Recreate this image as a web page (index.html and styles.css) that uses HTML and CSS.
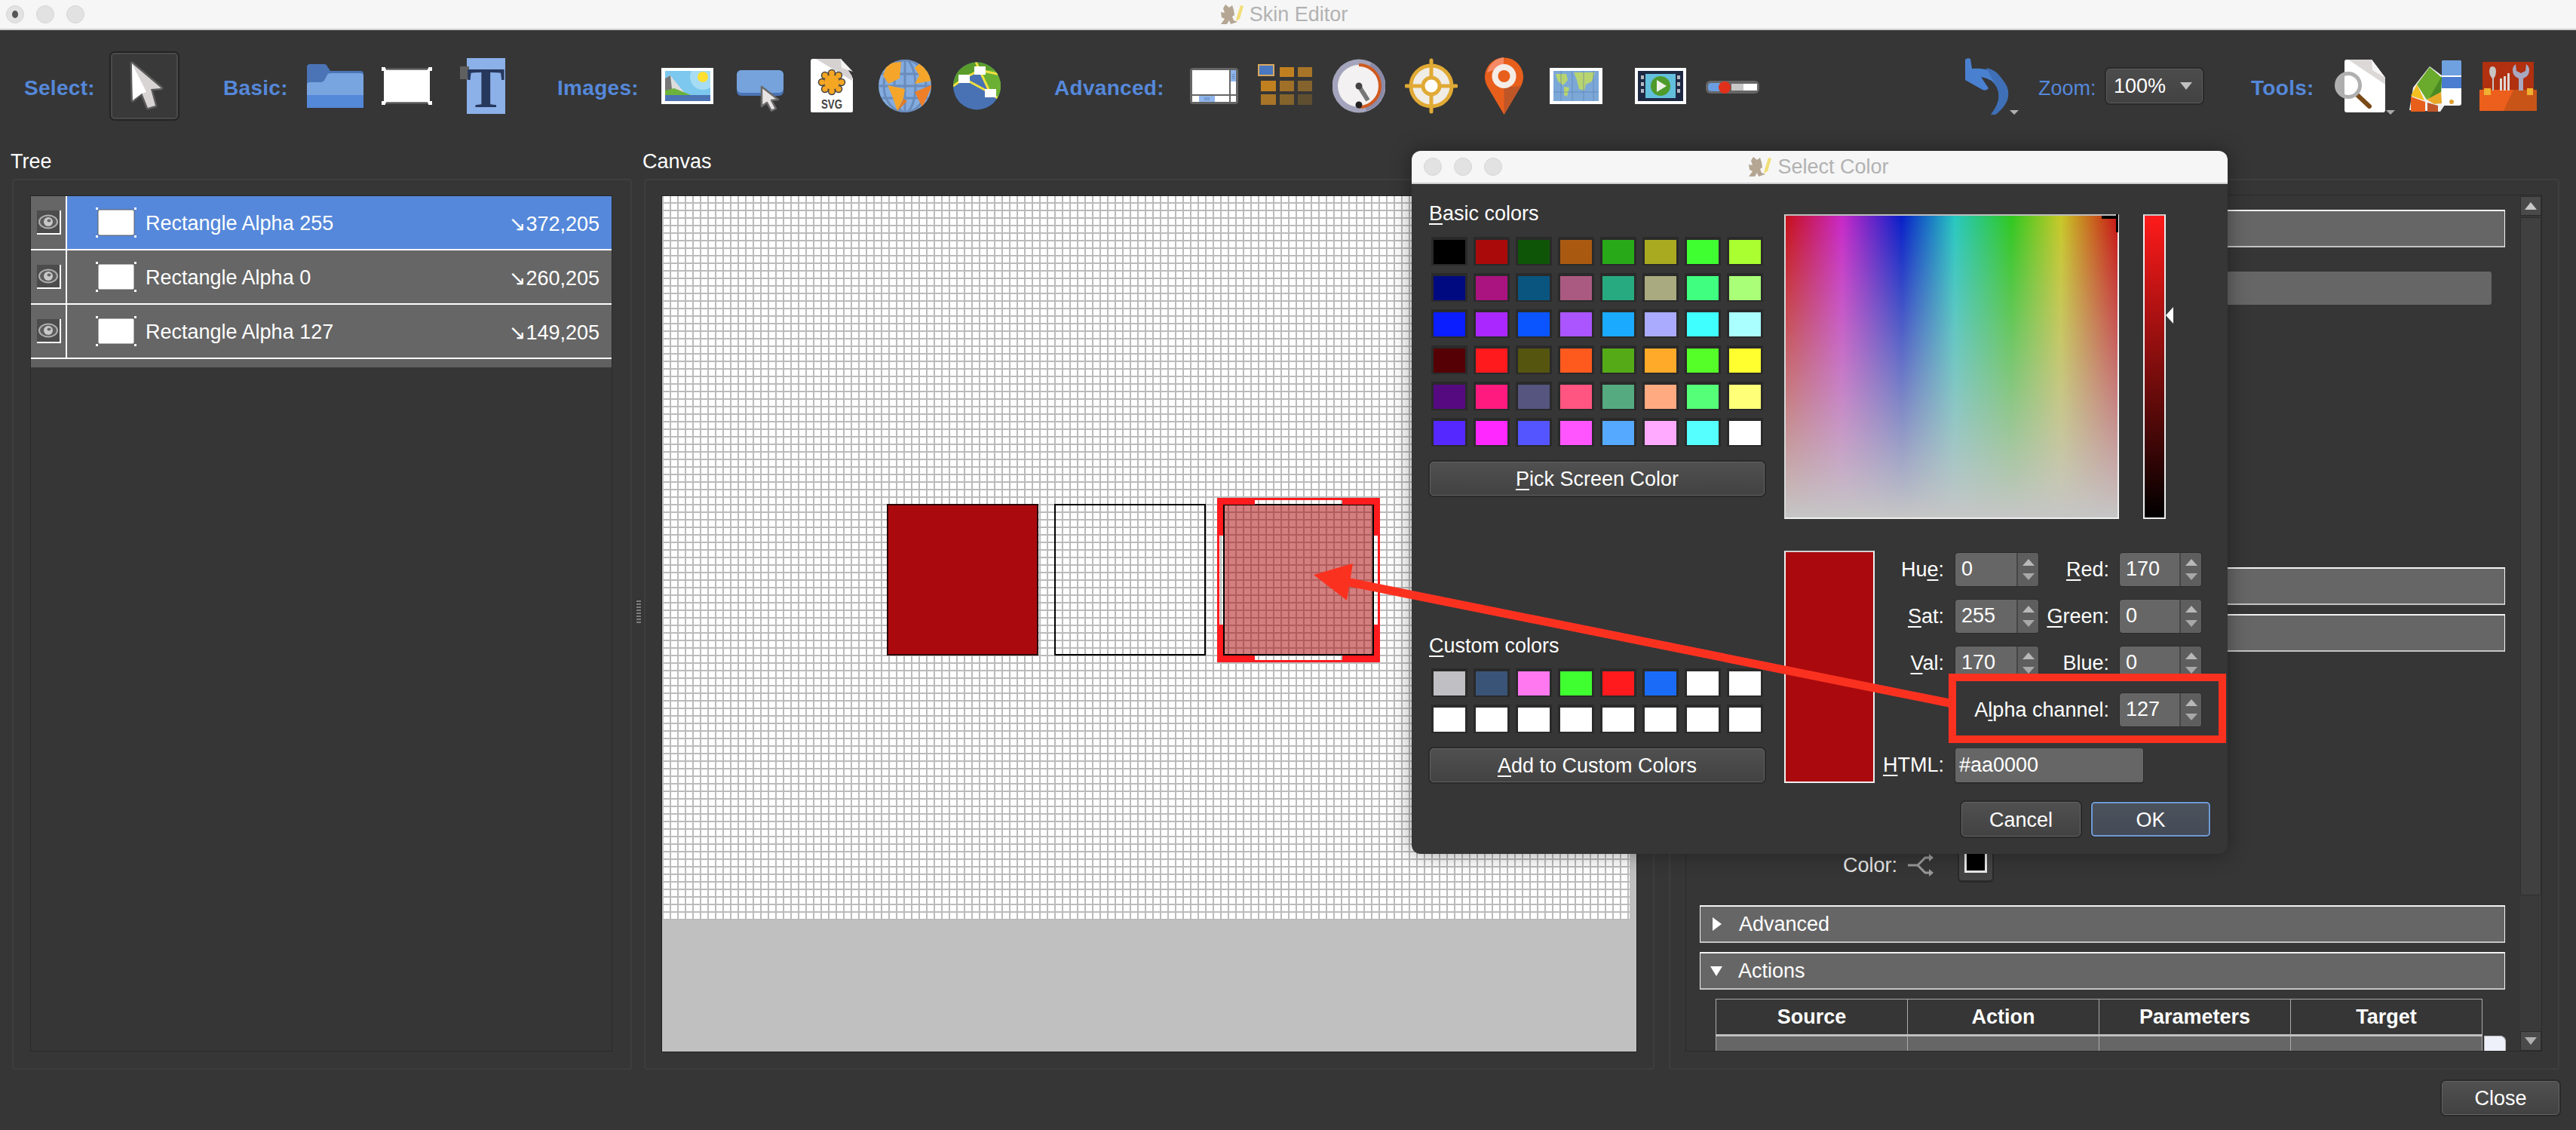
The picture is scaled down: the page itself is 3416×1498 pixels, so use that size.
FILE: index.html
```
<!DOCTYPE html>
<html lang="en">
<head>
<meta charset="utf-8">
<title>Skin Editor</title>
<link rel="stylesheet" href="styles.css">
</head>
<body>
<svg class="defs" width="0" height="0" aria-hidden="true">
  <symbol id="logo" viewBox="0 0 30 26">
    <path d="M6 0l5 4 4-3 2 6 1 7-3 2 2 5 5 2-9 3-2-5-3 5H0l5-7-4-2-1-7 5 1-2-6z" fill="#b4a692"/>
    <path d="M21 17l5-16 4 1-5 17-5 3z" fill="#f2de78"/>
  </symbol>
  <symbol id="eye" viewBox="0 0 32 32">
    <rect width="32" height="32" fill="#4c4c4c"/>
    <path d="M31 0v31H0" fill="none" stroke="#fff" stroke-width="2"/>
    <ellipse cx="15" cy="15" rx="12" ry="8.500" fill="#5c5c5c" stroke="#b0b0b0" stroke-width="2"/>
    <circle cx="15" cy="15" r="6" fill="#c8c8c8"/>
    <ellipse cx="16" cy="13.500" rx="2.500" ry="2" fill="#666"/>
  </symbol>
  <symbol id="rectic" viewBox="0 0 54 40">
    <rect x="3" y="3" width="48" height="34" rx="2" fill="#fff" stroke="#606060" stroke-width="1"/>
    <path d="M0 0h3v3H0zM51 0h3v3h-3zM0 37h3v3H0zM51 37h3v3h-3z" fill="#fff"/>
  </symbol>
</svg>

<div class="app">
  <header class="wintitle">
    <div class="lights"><span class="light light-dot"></span><span class="light"></span><span class="light"></span></div>
    <div class="wintitle-text"><svg class="logo"><use href="#logo"/></svg><span>Skin Editor</span></div>
  </header>

  <nav class="toolbar">
    <span class="tb-label lb-select">Select:</span>
    <div class="tb-select">
      <svg viewBox="0 0 89 88" width="89" height="88"><path d="M28 14l39 33-14 1 6 22-10 3-8-20-12 10z" fill="#4a4a4a" stroke="#5a5a5a" stroke-width="5" stroke-linejoin="round"/><path d="M28 14l39 33-14 1 6 22-10 3-8-20-12 10z" fill="#d8d4d4"/><path d="M28 14l19 38-6 2-12 9z" fill="#fff"/></svg>
    </div>
    <span class="tb-label lb-basic">Basic:</span>
    <svg class="ic ic-folder" viewBox="0 0 75 76"><path d="M0 13q0-4 4-4h19q3 0 4 3l4 6h40q4 0 4 4v15H0z" fill="#4a74b6"/><path d="M0 36q0-3 4-3h14q4 0 6-4l3-6q1-2 4-2h40q4 0 4 4v42H0z" fill="#78a5e0"/><rect y="50" width="75" height="17" fill="#5488d8"/></svg>
    <svg class="ic ic-rect" viewBox="0 0 67 76"><rect x="3" y="15" width="61" height="46" rx="2" fill="#fff"/><path d="M6 15.500h55M6 60.500h55" stroke="#5c5c5c" stroke-width="2.500"/><path d="M0 13h5v5H0zM62 13h5v5h-5zM0 58h5v5H0zM62 58h5v5h-5z" fill="#fff"/></svg>
    <svg class="ic ic-text" viewBox="0 -12 60 100"><rect x="9" y="1" width="51" height="74" fill="#8cb0e8"/><rect y="12" width="12" height="17" fill="#606060"/><text class="ic-t" x="9" y="66">T</text></svg>
    <span class="tb-label lb-images">Images:</span>
    <svg class="ic ic-image" viewBox="0 0 69 76"><rect y="14" width="69" height="48" fill="#fff"/><rect x="5" y="18" width="60" height="40" fill="#7cc8ee"/><clipPath id="ph"><rect x="5" y="18" width="60" height="40"/></clipPath><g clip-path="url(#ph)"><circle cx="55" cy="26" r="17" fill="#a6dcf4"/><circle cx="55" cy="26" r="7" fill="#ffe030"/></g><path d="M5 28l7-4 8 10 10 12H5z" fill="#dcdcdc"/><path d="M5 28l7-4 2 18-9 4z" fill="#777"/><path d="M5 44l12-3 22 9 14 1v3H5z" fill="#6cb23c"/><rect x="5" y="50" width="60" height="8" fill="#4a74b4"/></svg>
    <svg class="ic ic-button" viewBox="0 0 62 76"><rect y="17" width="62" height="34" rx="6" fill="#4a74b4"/><rect y="17" width="62" height="30" rx="6" fill="#76a3dc"/><path d="M33 39l22 17-9 1 6 11-6 3-6-11-7 5z" fill="#e8e4e4" stroke="#6a6a6a" stroke-width="2.500" stroke-linejoin="round"/></svg>
    <svg class="ic ic-svg" viewBox="0 0 56 76"><path d="M3 2h37l16 26v43q0 2-2 2H2q-2 0-2-2V5q0-3 3-3z" fill="#fff"/><path d="M7 2h33l15 23v6z" fill="#d6d2d2"/><path d="M40 2l1 12 15 5z" fill="#f4f2f2"/><g fill="#f5a623" stroke="#444" stroke-width="1.500"><circle cx="28" cy="21" r="4.500"/><circle cx="37" cy="24" r="4.500"/><circle cx="41" cy="33" r="4.500"/><circle cx="37" cy="42" r="4.500"/><circle cx="28" cy="45" r="4.500"/><circle cx="19" cy="42" r="4.500"/><circle cx="15" cy="33" r="4.500"/><circle cx="19" cy="24" r="4.500"/></g><circle cx="28" cy="33" r="10" fill="#f5a623"/><text class="ic-svgtext" x="14" y="68" textLength="28" lengthAdjust="spacingAndGlyphs">SVG</text></svg>
    <svg class="ic ic-globe" viewBox="0 0 70 76"><defs><clipPath id="gc"><circle cx="35" cy="38" r="35"/></clipPath></defs><circle cx="35" cy="38" r="35" fill="#84acdf"/><g clip-path="url(#gc)"><g fill="none" stroke="#6a8cbc" stroke-width="3"><path d="M0 22h70M0 38h70M0 54h70"/><ellipse cx="35" cy="38" rx="14" ry="35"/><path d="M35 3v70"/><ellipse cx="35" cy="38" rx="28" ry="35"/></g><path d="M6 24L12 8l18-2-2 22-15 7z" fill="#f5a62a"/><path d="M12 37l23 5-2 12-8 17-7-20z" fill="#f5a62a"/><path d="M25 71l8-16 5 3z" fill="#e07a24"/><path d="M48 14l10-9 14 26-24 4 6-11z" fill="#f5a62a"/><path d="M48 46l24-10-14 30z" fill="#ee7f28"/></g></svg>
    <svg class="ic ic-net" viewBox="0 0 63 76"><defs><clipPath id="nc"><circle cx="31.500" cy="38" r="31.500"/></clipPath></defs><g clip-path="url(#nc)"><rect y="6" width="63" height="64" fill="#4872b4"/><path d="M0 40L14 28l21-11 14 30 14 10V6H0z" fill="#5a9c2c"/><path d="M35 17l28 0v40L49 47z" fill="#6cb033"/><g fill="none" stroke="#f0e040" stroke-width="3"><path d="M0 38l14-10 21-11M14 28l35 19 14 10M35 17l14 30M35 17L30 6M35 17l28 6"/></g></g><path d="M7 23h15v11H7zM28 12h15v11H28zM42 42h15v11H42z" fill="#fff"/></svg>
    <span class="tb-label lb-adv">Advanced:</span>
    <svg class="ic ic-widget" viewBox="0 0 64 76"><rect y="14" width="64" height="48" rx="4" fill="#666"/><rect x="3" y="17" width="49" height="32" fill="#fff"/><rect x="54" y="17" width="7" height="32" fill="#fff"/><rect x="54" y="17" width="7" height="15" fill="#8fb6ec"/><rect x="3" y="51" width="49" height="8" fill="#fff"/><rect x="12" y="51" width="21" height="8" fill="#8fb6ec"/><rect x="54" y="51" width="7" height="8" fill="#fff"/><path d="M20 53v4M22.500 53v4M25 53v4M55.500 23h4M55.500 25.500h4M55.500 28h4" stroke="#5a7ab0" stroke-width="1"/></svg>
    <svg class="ic ic-grid" viewBox="0 0 72 76"><rect x="1" y="10" width="20" height="14" fill="#4a78c0" stroke="#d8a860" stroke-width="2"/><rect x="29" y="13" width="19" height="13" fill="#c08020"/><rect x="53" y="13" width="19" height="13" fill="#a87428"/><rect x="4" y="31" width="20" height="14" fill="#c08020"/><rect x="29" y="31" width="19" height="14" fill="#a07028"/><rect x="53" y="31" width="19" height="14" fill="#84642c"/><rect x="4" y="49" width="20" height="14" fill="#a87428"/><rect x="29" y="49" width="19" height="14" fill="#84642c"/><rect x="53" y="49" width="19" height="14" fill="#5e4f30"/></svg>
    <svg class="ic ic-gauge" viewBox="0 0 70 76"><circle cx="35" cy="38" r="35.500" fill="#a4a4bc"/><path d="M52 7a35 35 0 0 1-7 64L35 38z" fill="#8a8aa8"/><circle cx="35" cy="38" r="28" fill="#f3f1f1"/><path d="M35 10a28 28 0 0 1 0 56" fill="none" stroke="#d05a20" stroke-width="4"/><path d="M35 38l12 19" stroke="#777" stroke-width="6"/><circle cx="35" cy="38" r="4.500" fill="#444"/><circle cx="35" cy="63" r="4.500" fill="#222"/></svg>
    <svg class="ic ic-target" viewBox="0 0 70 76"><circle cx="35" cy="38" r="27" fill="#f0ece6" stroke="#e0aa35" stroke-width="5"/><path d="M35 4v68M2 38h66" stroke="#e0aa35" stroke-width="5" stroke-linecap="round"/><circle cx="35" cy="38" r="11" fill="#fff" stroke="#e0aa35" stroke-width="5"/></svg>
    <svg class="ic ic-pin" viewBox="0 0 51 76"><path d="M25.500 76L3 38A25.500 25.500 0 1 1 48 38z" fill="#e85f1c"/><path d="M25.500 76V40L48 38z" fill="#bf5628"/><path d="M3 20a25.500 25.500 0 0 1 22-20v12z" fill="#f58a66"/><circle cx="25.500" cy="25" r="16" fill="#f4ece6"/><circle cx="25.500" cy="25" r="8" fill="#e85f1c"/></svg>
    <svg class="ic ic-map" viewBox="0 0 70 76"><rect y="14" width="70" height="48" fill="#fff"/><rect x="5" y="18" width="60" height="40" fill="#7ca8d8"/><path d="M8 22h14l2 8-6 7-7-5zM19 39l7 1-3 12-4-2zM32 20h28l-4 12-8 4-2 8-7-2-3-12z" fill="#b8d470"/><path d="M5 46h60M15 18v40M30 18v40M45 18v40M58 18v40" stroke="#5878a8" stroke-width="1" opacity=".6"/></svg>
    <svg class="ic ic-video" viewBox="0 0 68 76"><rect y="14" width="68" height="48" fill="#fff"/><rect x="4" y="18" width="60" height="40" fill="#1e2a44"/><rect x="14" y="22" width="40" height="32" fill="#62c0dc"/><path d="M8 24h4v5H8zM8 33h4v5H8zM8 42h4v5H8zM56 24h4v5h-4zM56 33h4v5h-4zM56 42h4v5h-4z" fill="#b4b8c0"/><circle cx="34" cy="38" r="13" fill="#4f9a2c"/><path d="M29 30l13 8-13 8z" fill="#eef2e8"/></svg>
    <svg class="ic ic-slider" viewBox="0 0 71 76"><rect y="31" width="71" height="17" rx="6" fill="#666"/><rect x="3" y="34" width="24" height="11" rx="4" fill="#6a9ee0"/><rect x="34" y="35" width="16" height="9" fill="#c8c8c8"/><rect x="50" y="35" width="18" height="9" fill="#fff"/><circle cx="25" cy="40" r="8" fill="#e0301a"/></svg>
    <svg class="ic ic-undo" viewBox="0 0 72 76"><path d="M1 3q3-3 7-1l2 13q28-2 40 14 20 24-9 47 -3 1-6 0 16-20 8-36-6-12-21-14l10 15q-3 4-8 2L1 30z" fill="#4a80d0"/><path d="M29 14q13 2 21 15 20 24-9 47-3 1-6 0 16-20 8-36z" fill="#3f6fb6"/><path d="M60 70h12l-6 6z" fill="#b0b0b0"/></svg>
    <span class="tb-zoom">Zoom:</span>
    <div class="combo"><span>100%</span><i class="combo-arrow"></i></div>
    <span class="tb-label lb-tools">Tools:</span>
    <svg class="ic ic-search" viewBox="0 0 80 76"><path d="M16 3h33l18 24v43q0 3-3 3H16q-3 0-3-3V6q0-3 3-3z" fill="#fff"/><path d="M18 3h31l18 24v9z" fill="#dcd8d8"/><path d="M49 3l1 14 17 10z" fill="#f6f4f4"/><path d="M29 49l17 16" stroke="#7a4a18" stroke-width="6" stroke-linecap="round"/><circle cx="18" cy="37" r="15.500" fill="#fff" fill-opacity=".6" stroke="#b0b0b0" stroke-width="5"/><path d="M68 70h12l-6 6z" fill="#aaa"/></svg>
    <svg class="ic ic-palette" viewBox="0 0 69 76"><path d="M0 70L5 40 27 12l16 12 10 30-12 18z" fill="#f0f0f0"/><path d="M10 36l17-23 16 14-1 19-19 10z" fill="#6aaa2c"/><path d="M26 55l17-30-1 21z" fill="#4a8a24"/><path d="M10 36L2 51l18 6z" fill="#f4c020"/><path d="M23 56l19-10 1 15-10 1z" fill="#e8a828"/><path d="M2 52l19 7v13H2z" fill="#e85f1c"/><path d="M24 60l14 4v8H24z" fill="#c0562a"/><rect x="43" y="4" width="26" height="60" rx="3" fill="#fff"/><path d="M43 24V7q0-3 3-3h20q3 0 3 3v17z" fill="#6fa0e0"/><rect x="43" y="26" width="26" height="15" fill="#4a7cd0"/><circle cx="56" cy="59" r="3" fill="#e0a030"/></svg>
    <svg class="ic ic-tools" viewBox="0 0 76 76"><rect x="4" y="6" width="68" height="38" fill="#b03010"/><rect y="43" width="76" height="28" fill="#ec5f1c"/><path d="M32 71l13-28h31v28z" fill="#c95418"/><path d="M17 44V28q-4-4-4-9 0-7 4-7 5 0 5 7 0 5-3 9v16z" fill="#c8c4c4"/><path d="M27 44V28h3v16zM32 44V25h3v19zM37 44V21h3v23z" fill="#e0d8d4"/><path d="M52 44V28q-8-3-8-11 0-5 4-8l1 9 6 3 6-3 1-9q4 3 4 8 0 8-8 11v16z" fill="#a8a8c0"/><rect x="6" y="41" width="9" height="9" fill="#f0b030"/><rect x="63" y="41" width="8" height="9" fill="#f0b030"/></svg>
  </nav>

  <main class="panels">
    <section class="col col-tree">
      <h2 class="col-label">Tree</h2>
      <div class="box box-tree">
        <div class="tree">
          <div class="row row-sel"><div class="row-eye"><svg class="eye"><use href="#eye"/></svg></div><div class="row-main"><svg class="rectic"><use href="#rectic"/></svg><span class="row-name">Rectangle Alpha 255</span><span class="row-pos">↘372,205</span></div></div>
          <div class="row"><div class="row-eye"><svg class="eye"><use href="#eye"/></svg></div><div class="row-main"><svg class="rectic"><use href="#rectic"/></svg><span class="row-name">Rectangle Alpha 0</span><span class="row-pos">↘260,205</span></div></div>
          <div class="row"><div class="row-eye"><svg class="eye"><use href="#eye"/></svg></div><div class="row-main"><svg class="rectic"><use href="#rectic"/></svg><span class="row-name">Rectangle Alpha 127</span><span class="row-pos">↘149,205</span></div></div>
          <div class="tree-foot"></div>
        </div>
      </div>
    </section>
    <div class="splitter"><i class="grip"></i></div>
    <section class="col col-canvas">
      <h2 class="col-label">Canvas</h2>
      <div class="box box-canvas">
        <div class="canvas">
          <div class="grid">
            <div class="shape shape-a"></div>
            <div class="shape shape-b"></div>
            <div class="shape shape-c"></div>
            <div class="sel">
              <i class="corner c-tl"></i><i class="corner c-tr"></i><i class="corner c-bl"></i><i class="corner c-br"></i>
            </div>
          </div>
        </div>
      </div>
    </section>
    <section class="col col-props">
      <div class="col-label"></div>
      <div class="box box-props">
        <div class="scroll">
          <div class="scroll-content">
            <div class="sec sec-first"></div>
            <div class="prop-field"></div>
            <div class="sec sec-mid"></div>
            <div class="sec sec-next"></div>
            <div class="color-row">
              <span class="color-label">Color:</span>
              <svg class="share" viewBox="0 0 34 30"><path d="M0 15h13L23 5h8M13 15l10 10h8" fill="none" stroke="#9a9a9a" stroke-width="3"/><path d="M28 0l6 5-6 5zM28 20l6 5-6 5z" fill="#9a9a9a"/></svg>
              <div class="color-btn"><i class="color-chip"></i></div>
            </div>
            <div class="sec sec-adv"><i class="tri-right"></i><span>Advanced</span></div>
            <div class="sec sec-next"><i class="tri-down"></i><span>Actions</span></div>
            <div class="actions">
              <table class="atable">
                <thead><tr><th>Source</th><th>Action</th><th>Parameters</th><th>Target</th></tr></thead>
                <tbody><tr><td></td><td></td><td></td><td></td></tr></tbody>
              </table>
              <div class="add-btn"></div>
            </div>
          </div>
          <div class="vbar">
            <div class="vbtn"><i class="up"></i></div>
            <div class="vthumb"></div>
            <div class="vtrack"></div>
            <div class="vbtn"><i class="down"></i></div>
          </div>
        </div>
      </div>
    </section>
  </main>

  <footer class="foot"><button class="btn btn-close">Close</button></footer>
</div>

<div class="dialog">
  <header class="wintitle dlg-title">
    <div class="lights"><span class="light"></span><span class="light"></span><span class="light"></span></div>
    <div class="wintitle-text"><svg class="logo"><use href="#logo"/></svg><span>Select Color</span></div>
  </header>
  <div class="dlg-body">
    <div class="dlg-left">
      <div class="dlg-label"><u>B</u>asic colors</div>
      <div class="swatches swatches-basic">
        <i style="background:#000"></i><i style="background:#aa0a0a"></i><i style="background:#0f5508"></i><i style="background:#aa5a10"></i><i style="background:#28aa18"></i><i style="background:#aaaa20"></i><i style="background:#40ff30"></i><i style="background:#aaff30"></i>
        <i style="background:#000a80"></i><i style="background:#aa1480"></i><i style="background:#0a5580"></i><i style="background:#aa5a80"></i><i style="background:#28aa80"></i><i style="background:#aaaa80"></i><i style="background:#40ff80"></i><i style="background:#aaff78"></i>
        <i style="background:#0a1eff"></i><i style="background:#aa28ff"></i><i style="background:#0a55ff"></i><i style="background:#aa55ff"></i><i style="background:#1aaaff"></i><i style="background:#aaaaff"></i><i style="background:#40ffff"></i><i style="background:#aaffff"></i>
        <i style="background:#550005"></i><i style="background:#ff1a1e"></i><i style="background:#555510"></i><i style="background:#ff5a1e"></i><i style="background:#55aa18"></i><i style="background:#ffaa28"></i><i style="background:#55ff28"></i><i style="background:#ffff30"></i>
        <i style="background:#550a80"></i><i style="background:#ff1a80"></i><i style="background:#555580"></i><i style="background:#ff5580"></i><i style="background:#55aa80"></i><i style="background:#ffaa80"></i><i style="background:#55ff78"></i><i style="background:#ffff78"></i>
        <i style="background:#5528ff"></i><i style="background:#ff28ff"></i><i style="background:#5555ff"></i><i style="background:#ff55ff"></i><i style="background:#55aaff"></i><i style="background:#ffaaff"></i><i style="background:#55ffff"></i><i style="background:#ffffff"></i>
      </div>
      <button class="btn btn-wide btn-pick"><u>P</u>ick Screen Color</button>
      <div class="dlg-label dlg-label-custom"><u>C</u>ustom colors</div>
      <div class="swatches swatches-custom">
        <i style="background:#c0c0c4"></i><i style="background:#3a5478"></i><i style="background:#ff78f0"></i><i style="background:#40ff30"></i><i style="background:#ff1a1e"></i><i style="background:#1a6cf8"></i><i style="background:#fff"></i><i style="background:#fff"></i>
        <i style="background:#fff"></i><i style="background:#fff"></i><i style="background:#fff"></i><i style="background:#fff"></i><i style="background:#fff"></i><i style="background:#fff"></i><i style="background:#fff"></i><i style="background:#fff"></i>
      </div>
      <button class="btn btn-wide btn-add"><u>A</u>dd to Custom Colors</button>
    </div>
    <div class="dlg-right">
      <div class="picker">
        <div class="sv"><i class="cross-h"></i><i class="cross-v"></i></div>
        <div class="val"><i class="val-mark"></i></div>
      </div>
      <div class="lower">
        <div class="preview"></div>
        <div class="fields">
          <label class="fl">Hu<u>e</u>:</label><div class="spin"><span>0</span><b></b></div>
          <label class="fl"><u>R</u>ed:</label><div class="spin spin-r"><span>170</span><b></b></div>
          <label class="fl"><u>S</u>at:</label><div class="spin"><span>255</span><b></b></div>
          <label class="fl"><u>G</u>reen:</label><div class="spin spin-r"><span>0</span><b></b></div>
          <label class="fl"><u>V</u>al:</label><div class="spin"><span>170</span><b></b></div>
          <label class="fl">Blue:</label><div class="spin spin-r"><span>0</span><b></b></div>
          <label class="fl fl-alpha">A<u>l</u>pha channel:</label><div class="spin spin-r"><span>127</span><b></b></div>
          <label class="fl fl-html"><u>H</u>TML:</label><div class="html-input">#aa0000</div>
        </div>
      </div>
      <div class="dlg-actions">
        <button class="btn btn-dlg">Cancel</button>
        <button class="btn btn-dlg btn-ok">OK</button>
      </div>
    </div>
  </div>
</div>

<svg class="callout" viewBox="0 0 3416 1498" aria-hidden="true">
  <rect x="2589" y="898" width="358" height="82" fill="none" stroke="#fb3120" stroke-width="10"/>
  <path d="M2590 933L1785 771" stroke="#fb3120" stroke-width="11" fill="none"/>
  <path d="M1742 762L1794 747 1786 796z" fill="#fb3120"/>
</svg>
</body>
</html>
```

FILE: styles.css
```
* { box-sizing: border-box; }
html, body { margin: 0; padding: 0; }
body {
  position: relative;
  width: 3416px;
  height: 1498px;
  overflow: hidden;
  background: #363636;
  color: #fff;
  font-family: "Liberation Sans", "DejaVu Sans", sans-serif;
  font-size: 27px;
}
.defs { position: absolute; }
u { text-underline-offset: 4px; text-decoration-thickness: 2px; }

/* window chrome */
.wintitle {
  display: grid;
  grid-template-columns: 1fr auto 1fr;
  align-items: center;
  height: 40px;
  background: #f6f6f6;
  border-bottom: 2px solid #cfcfcf;
  padding-left: 8px;
  padding-right: 8px;
}
.lights { display: flex; gap: 16px; }
.light {
  display: flex;
  align-items: center;
  justify-content: center;
  width: 24px;
  height: 24px;
  border-radius: 50%;
  background: #e2e2e2;
  border: 1px solid #d6d6d6;
}
.light-dot::before { content: ""; width: 8px; height: 10px; border-radius: 50%; background: #555; }
.wintitle-text {
  grid-column: 2;
  display: flex;
  align-items: center;
  gap: 8px;
  color: #b2b2b2;
  padding-right: 10px;
  line-height: 30px;
}
.logo { width: 30px; height: 26px; }

/* toolbar */
.toolbar {
  display: flex;
  align-items: center;
  height: 148px;
  padding-left: 32px;
}
.tb-label {
  color: #5588da;
  font-weight: 700;
  font-size: 28px;
  letter-spacing: .3px;
  padding-top: 6px;
  white-space: nowrap;
}
.lb-select { width: 96px; }
.lb-basic { width: 87px; margin-left: 60px; }
.lb-images { width: 108px; margin-left: 69px; }
.lb-adv { width: 147px; margin-left: 71px; }
.lb-tools { width: 87px; margin-left: 64px; }
.tb-zoom { width: 75px; margin-left: 26px; padding-top: 6px; color: #5588da; }
.tb-select {
  width: 89px;
  height: 88px;
  margin-left: 19px;
  background: #393939;
  border: 2px solid #4a4a4a;
  border-radius: 5px;
  box-shadow: 0 0 0 2px #242424;
}
.tb-select svg { display: block; margin: -2px; }
.ic { display: block; flex: none; height: 76px; }
.ic-t { font-family: "Liberation Serif", serif; font-weight: 700; font-size: 76px; fill: #26385c; }
.ic-svgtext { font-family: "Liberation Sans", sans-serif; font-weight: 700; font-size: 16px; fill: #444; }
.ic-folder { width: 75px; margin-left: 24px; }
.ic-rect { width: 67px; margin-left: 24px; }
.ic-text { width: 60px; height: 100px; margin: -12px 0 -12px 37px; }
.ic-image { width: 69px; margin-left: 30px; }
.ic-button { width: 62px; margin-left: 31px; }
.ic-svg { width: 56px; margin-left: 36px; }
.ic-globe { width: 70px; margin-left: 34px; }
.ic-net { width: 63px; margin-left: 29px; }
.ic-widget { width: 64px; margin-left: 33px; }
.ic-grid { width: 72px; margin-left: 26px; }
.ic-gauge { width: 70px; margin-left: 27px; }
.ic-target { width: 70px; margin-left: 26px; }
.ic-pin { width: 51px; margin-left: 36px; }
.ic-map { width: 70px; margin-left: 35px; }
.ic-video { width: 68px; margin-left: 43px; }
.ic-slider { width: 71px; margin-left: 26px; }
.ic-undo { width: 72px; margin-left: 272px; }
.ic-search { width: 80px; margin-left: 24px; }
.ic-palette { width: 69px; margin-left: 19px; }
.ic-tools { width: 76px; margin-left: 24px; }
.combo {
  display: flex;
  align-items: center;
  justify-content: space-between;
  width: 128px;
  height: 46px;
  margin-left: 15px;
  padding: 0 13px 0 9px;
  background: linear-gradient(#4c4c4c, #424242);
  border: 1px solid #5c5c5c;
  border-radius: 5px;
  box-shadow: 0 0 0 2px #2a2a2a;
  font-size: 27px;
}
.combo-arrow { width: 0; height: 0; border: 8px solid transparent; border-top: 10px solid #c0c0c0; border-bottom: 0; }

/* panels */
.panels { display: flex; height: 1230px; padding-left: 16px; }
.col { display: flex; flex-direction: column; flex: none; }
.col-tree { width: 822px; }
.col-canvas { width: 1340px; }
.col-props { width: 1181px; margin-left: 19px; }
.col-label {
  height: 49px;
  margin: 0 0 0 -2px;
  padding-top: 11px;
  font-weight: 400;
  font-size: 27px;
  line-height: 30px;
}
.box {
  flex: 1;
  border: 2px solid #3e3e3e;
  border-radius: 4px;
  min-height: 0;
}
.box-tree { padding: 20px 24px 22px 22px; }
.box-canvas { padding: 21px 22px 22px 22px; }
.box-props { padding: 19px 21px 22px 20px; }
.splitter { flex: none; width: 16px; display: flex; align-items: center; justify-content: center; padding: 33px 0 17px 2px; }
.grip {
  display: block;
  width: 6px;
  height: 32px;
  background: radial-gradient(circle, #8a8a8a 1px, transparent 1.500px) 0 0 / 3px 4px;
}

/* tree */
.tree { height: 100%; border: 1px solid #2a2a2a; border-top-color: #222; }
.row { display: flex; height: 72px; background: #666; border-bottom: 2px solid #fff; }
.row-eye { flex: none; display: flex; align-items: center; padding-left: 8px; width: 48px; border-right: 2px solid #fff; }
.eye { width: 32px; height: 32px; }
.row-main { flex: 1; display: flex; align-items: center; padding: 0 16px 0 38px; }
.row-sel .row-main { background: #5588da; }
.rectic { flex: none; width: 54px; height: 40px; margin-right: 12px; }
.row-name, .row-pos { padding-top: 3px; }
.row-name { flex: 1; }
.tree-foot { height: 11px; background: #606060; }

/* canvas */
.canvas {
  height: 100%;
  background: #c0c0c0;
  box-shadow: 0 0 0 1px #222;
}
.grid {
  position: relative;
  width: 1283px;
  height: 960px;
  background-color: #fff;
  background-image: linear-gradient(90deg, transparent 8px, #bbb 8px), linear-gradient(transparent 8px, #bbb 8px);
  background-size: 10px 10px;
  background-position: 2px 0;
}
.shape { position: absolute; top: 408px; width: 201px; height: 201px; border: 2px solid #000; }
.shape-a { left: 298px; background: #aa0a0d; border-color: #2a0000; }
.shape-b { left: 520px; }
.shape-c { left: 744px; width: 200px; background: rgba(170, 0, 0, .5); }
.sel { position: absolute; left: 736px; top: 400px; width: 216px; height: 218px; border: 3px solid #ff1a1e; }
.corner { position: absolute; width: 50px; height: 50px; border: 0 solid #ff1a1e; }
.c-tl { left: -3px; top: -3px; border-width: 9px 0 0 8px; }
.c-tr { right: -3px; top: -3px; border-width: 9px 8px 0 0; }
.c-bl { left: -3px; bottom: -3px; border-width: 0 0 9px 8px; }
.c-br { right: -3px; bottom: -3px; border-width: 0 8px 9px 0; }

/* properties */
.scroll { display: flex; height: 100%; border: 1px solid #2a2a2a; overflow: hidden; }
.scroll-content { flex: 1; min-width: 0; padding: 19px 20px 0 18px; overflow: hidden; }
.sec {
  display: flex;
  align-items: center;
  height: 50px;
  background: #666;
  border: solid #f4f4f4;
  border-width: 2px 1px 2px 1px;
  border-bottom-color: #c4c4c4;
  font-size: 27px;
}
.prop-field { height: 44px; width: 700px; margin: 32px 18px 0 auto; background: #666; border-radius: 3px; }
.sec-mid { margin-top: 348px; }
.sec-next { margin-top: 12px; }
.sec-adv { margin-top: 33px; }
.tri-right { width: 0; height: 0; margin: 0 23px 0 16px; border: 9px solid transparent; border-left: 12px solid #fff; border-right: 0; }
.tri-down { width: 0; height: 0; margin: 0 21px 0 13px; border: 8px solid transparent; border-top: 13px solid #fff; border-bottom: 0; }
.color-row { display: flex; align-items: flex-end; height: 57px; margin-top: 246px; padding-left: 190px; }
.color-label { width: 72px; line-height: 36px; margin-bottom: 2px; color: #e6e6e6; white-space: nowrap; }
.share { width: 34px; height: 30px; margin: 0 0 5px 14px; }
.color-btn { width: 44px; height: 57px; margin-left: 34px; padding: 0 7px 10px; background: #444; border-radius: 0 0 4px 4px; box-shadow: 0 1px 0 2px #2a2a2a; }
.color-chip { display: block; width: 100%; height: 100%; background: #000; border: solid #e8e8e8; border-width: 0 3px 3px; }
.actions { display: flex; align-items: flex-start; margin: 12px 0 0 21px; }
.atable { flex: none; width: 1017px; table-layout: fixed; border-collapse: collapse; font-size: 27px; }
.atable th { height: 48px; font-weight: 700; border: 1px solid #aaa; padding: 0; }
.atable td { height: 60px; background: #666; border: 1px solid #aaa; border-top: 3px solid #c0c0c0; padding: 0; }
.add-btn { flex: none; width: 31px; height: 60px; margin-top: 49px; background: #eef0fa; border-radius: 0 8px 0 0; border-left: 2px solid #333; box-shadow: inset 0 0 0 1px #bbb; }
.vbar { flex: none; width: 28px; display: flex; flex-direction: column; padding-top: 1px; }
.vbtn { display: flex; align-items: center; justify-content: center; height: 26px; background: #4a4a4a; border: 1px solid #2c2c2c; }
.up { width: 0; height: 0; border: 8px solid transparent; border-bottom: 10px solid #c8c8c8; border-top: 0; }
.down { width: 0; height: 0; border: 8px solid transparent; border-top: 10px solid #b0b0b0; border-bottom: 0; }
.vthumb { height: 899px; margin-top: 2px; background: #404040; border: 1px solid #2e2e2e; }
.vtrack { flex: 1; background: #3a3a3a; }

/* buttons */
.btn {
  display: block;
  color: #fff;
  font: 400 27px "Liberation Sans", "DejaVu Sans", sans-serif;
  background: linear-gradient(#505050, #424242);
  border: 1px solid #626262;
  border-radius: 5px;
  box-shadow: 0 0 0 2px #2a2a2a;
  padding: 2px 0 0;
}
.foot { display: flex; justify-content: flex-end; padding: 15px 22px 0 0; }
.btn-close { width: 156px; height: 45px; }

/* dialog */
.dialog {
  position: absolute;
  left: 1872px;
  top: 200px;
  width: 1082px;
  height: 932px;
  background: #363636;
  border-radius: 12px;
  overflow: hidden;
  box-shadow: 0 0 28px rgba(0, 0, 0, .38);
}
.dlg-title { height: 44px; padding-left: 16px; }
.dlg-body { display: flex; }
.dlg-left { flex: none; width: 468px; padding: 24px 0 0 24px; }
.dlg-label { height: 30px; line-height: 30px; margin-left: -1px; }
.dlg-label-custom { margin-top: 184px; }
.swatches {
  display: grid;
  grid-template-columns: repeat(8, 42px);
  grid-auto-rows: 32px;
  gap: 16px 14px;
  margin: 20px 0 0 5px;
}
.swatches i { display: block; box-shadow: 0 -1px 0 3px #2a2a2a; }
.swatches-custom { margin-top: 19px; }
.btn-wide { width: 444px; height: 45px; margin-top: 22px; }
.dlg-right { flex: 1; padding: 40px 0 0 24px; min-width: 0; margin-left: 2px; }
.picker { display: flex; gap: 32px; }
.sv {
  position: relative;
  width: 444px;
  height: 404px;
  border: 2px solid #f0f0f0;
  border-top-color: #bdbdbd;
  border-left-color: #d8d8d8;
  background:
    linear-gradient(rgba(198, 198, 198, 0), #c6c6c6),
    linear-gradient(90deg, #c8101a 0, #c828c8 17%, #0820c8 35%, #28c8c0 51%, #30c820 68%, #c8c828 83%, #c81414 100%);
}
.cross-h { position: absolute; right: 0; top: 0; width: 21px; height: 4px; background: #000; }
.cross-v { position: absolute; right: -1px; top: -2px; width: 3px; height: 24px; background: #000; }
.val {
  position: relative;
  width: 30px;
  height: 404px;
  border: 2px solid #f0f0f0;
  border-top-color: #c8c8c8;
  background: linear-gradient(#ff1a1a, #000);
}
.val-mark { position: absolute; left: 28px; top: 121px; width: 0; height: 0; border: 11px solid transparent; border-right: 10px solid #fff; border-left: 0; }
.lower { display: flex; margin-top: 42px; }
.preview { flex: none; width: 120px; height: 308px; background: #aa0a0d; border: 2px solid #f0f0f0; border-top-color: #d0d0d0; }
.fields {
  display: grid;
  grid-template-columns: 92px 125px 94px 122px;
  grid-auto-rows: 44px;
  row-gap: 18px;
  margin-top: 3px;
  align-items: center;
}
.fl { text-align: right; white-space: nowrap; }
.fl-alpha { grid-column: 1 / 4; }
.fl-html { margin-top: 22px; }
.spin {
  position: relative;
  display: flex;
  height: 44px;
  margin-left: 15px;
  background: #666;
  border-radius: 4px;
  box-shadow: 0 0 0 1px #2c2c2c;
  padding-left: 8px;
  line-height: 42px;
}
.spin-r { margin-left: 14px; }
.spin b { position: absolute; right: 0; top: 0; bottom: 0; width: 29px; border-left: 2px solid #464646; background: #5e5e5e; border-radius: 0 4px 4px 0; }
.spin b::before, .spin b::after { content: ""; position: absolute; left: 6px; width: 0; height: 0; border: 8px solid transparent; }
.spin b::before { top: 8px; border-bottom: 9px solid #b8b8b8; border-top: 0; }
.spin b::after { bottom: 8px; border-top: 9px solid #a8a8a8; border-bottom: 0; }
.html-input {
  grid-column: 2 / 4;
  width: 249px;
  height: 45px;
  margin: 22px 0 0 15px;
  background: #666;
  border-radius: 3px;
  padding-left: 5px;
  line-height: 44px;
  box-shadow: 0 1px 0 1px #2c2c2c;
}
.dlg-actions { display: flex; justify-content: flex-end; gap: 14px; margin-top: 25px; padding-right: 23px; }
.btn-dlg { width: 158px; height: 46px; }
.btn-ok { background: linear-gradient(#4c525c, #454b56); border: 2px solid #6f9ad6; box-shadow: 0 0 0 1px #2a2a2a; }

.callout { position: absolute; left: 0; top: 0; width: 3416px; height: 1498px; pointer-events: none; }
```
